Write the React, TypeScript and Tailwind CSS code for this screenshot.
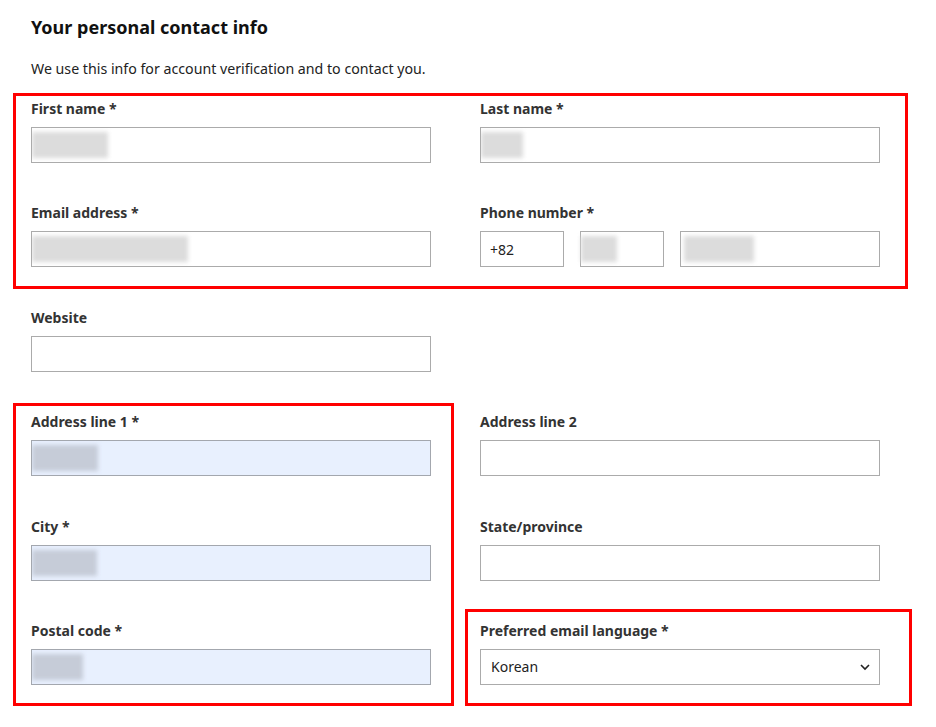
import { ReactNode } from 'react';

const font = { fontFamily: '"Noto Sans", "Open Sans", "Noto Sans CJK KR", sans-serif' };

function Blur({ w, tint = false }: { w: number; tint?: boolean }) {
  return (
    <div
      className={`h-[26px] blur-[2px] ${tint ? 'bg-[#c6ccd8]' : 'bg-[#dcdcdc]'}`}
      style={{ width: w }}
    />
  );
}

function Field({
  label,
  children,
  filled = false,
}: {
  label: string;
  children?: ReactNode;
  filled?: boolean;
}) {
  return (
    <div className="flex flex-col">
      <div className="h-5 text-[14px] leading-5 font-bold text-[#333]">{label}</div>
      <div
        className={`mt-2 h-9 w-[400px] border flex items-center overflow-hidden ${
          filled ? 'bg-[#e8f0fe] border-[#a3a7ae]' : 'bg-white border-[#ababab]'
        }`}
      >
        {children}
      </div>
    </div>
  );
}

export default function App() {
  return (
    <div className="relative w-[936px] h-[727px] bg-white overflow-hidden" style={font}>
      <div className="pl-[31px] pt-[13px]">
        <h1 className="h-7 text-[18px] leading-7 font-bold text-[#111]">Your personal contact info</h1>
        <p className="mt-[18px] h-5 text-[14.2px] leading-5 text-[#222]">
          We use this info for account verification and to contact you.
        </p>

        <div className="mt-5 grid grid-cols-[400px_400px] gap-x-[49px] gap-y-[40.4px]">
          <Field label="First name *">
            <Blur w={76} />
          </Field>
          <Field label="Last name *">
            <Blur w={42} />
          </Field>

          <Field label="Email address *">
            <Blur w={156} />
          </Field>
          <div className="flex flex-col">
            <div className="h-5 text-[14px] leading-5 font-bold text-[#333]">Phone number *</div>
            <div className="mt-2 flex gap-4">
              <div className="h-9 w-[84px] border border-[#ababab] flex items-center px-[9px] text-[14px] text-[#222]">
                +82
              </div>
              <div className="h-9 w-[84px] border border-[#ababab] flex items-center">
                <Blur w={36} />
              </div>
              <div className="h-9 w-[200px] border border-[#ababab] flex items-center pl-[3px]">
                <Blur w={70} />
              </div>
            </div>
          </div>

          <Field label="Website" />
          <div />

          <Field label="Address line 1 *" filled>
            <Blur w={66} tint />
          </Field>
          <Field label="Address line 2" />

          <Field label="City *" filled>
            <Blur w={65} tint />
          </Field>
          <Field label="State/province" />

          <Field label="Postal code *" filled>
            <Blur w={51} tint />
          </Field>
          <div className="flex flex-col">
            <div className="h-5 text-[14px] leading-5 font-bold text-[#333]">Preferred email language *</div>
            <div className="mt-2 h-9 w-[400px] border border-[#ababab] flex items-center justify-between pl-[10px] pr-[8px] text-[14px] text-[#222]">
              <span>Korean</span>
              <svg width="12" height="12" viewBox="0 0 12 12" fill="none">
                <path d="M2 4l4 4 4-4" stroke="#222" strokeWidth="1.6" />
              </svg>
            </div>
          </div>
        </div>
      </div>

      {/* annotation boxes */}
      <div className="absolute left-[13px] top-[93px] w-[895px] h-[196px] border-[3px] border-[#ff0000]" />
      <div className="absolute left-[13px] top-[403px] w-[441px] h-[303px] border-[3px] border-[#ff0000]" />
      <div className="absolute left-[465px] top-[609px] w-[447px] h-[97px] border-[3px] border-[#ff0000]" />
    </div>
  );
}
